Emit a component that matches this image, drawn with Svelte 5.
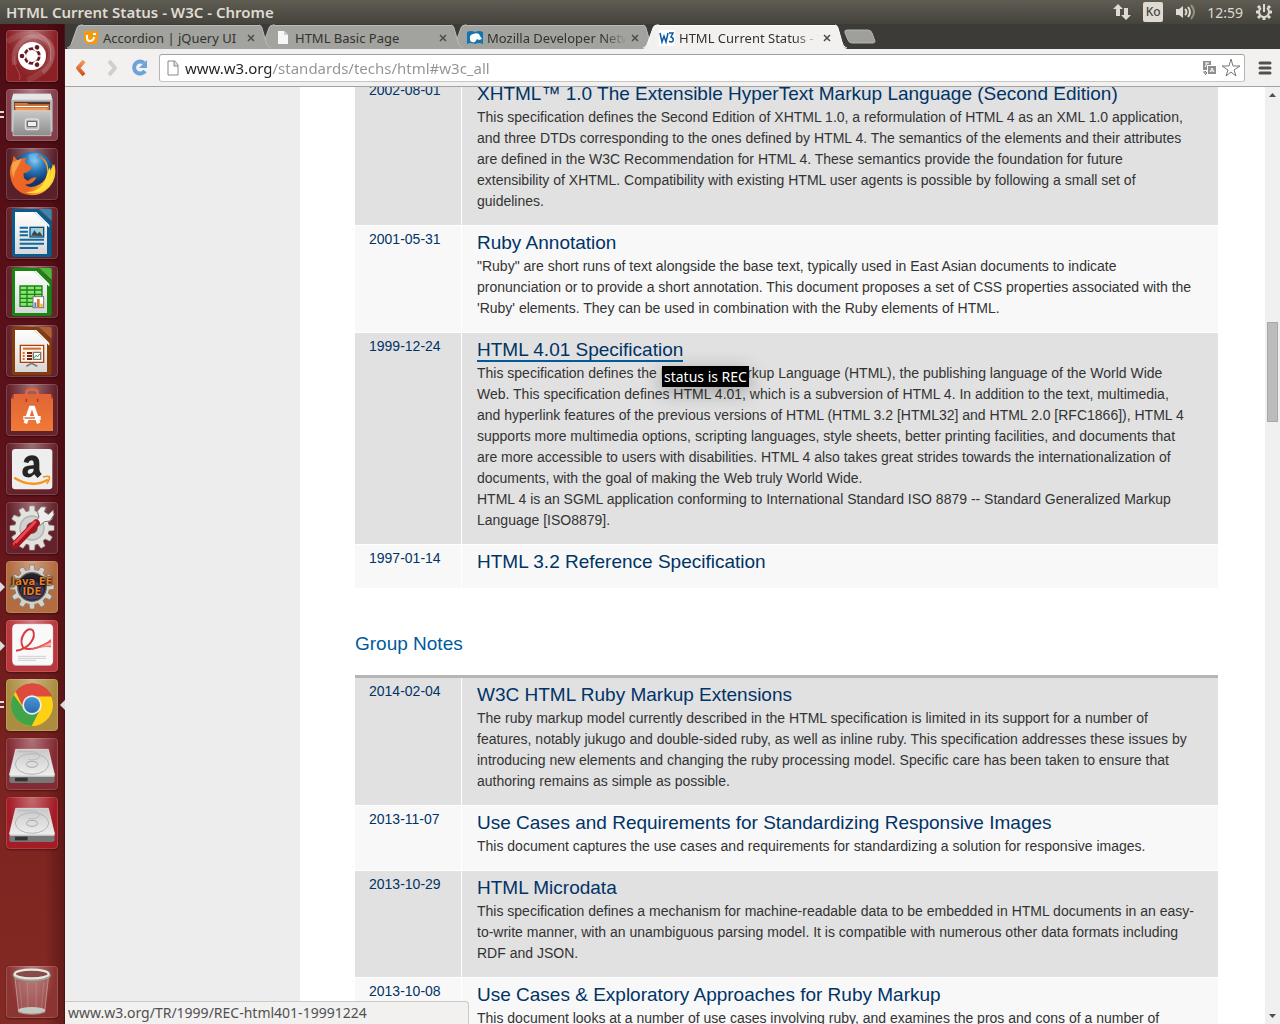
<script>
  const tabs = [
    { icon: 'jquery', title: 'Accordion | jQuery UI' },
    { icon: 'page', title: 'HTML Basic Page' },
    { icon: 'mdn', title: 'Mozilla Developer Network', long: true },
    { icon: 'w3', title: 'HTML Current Status - W3C', long: true, active: true }
  ];

  const launcher = [
    { id: 'dash', label: 'Search your computer' },
    { id: 'files', label: 'Files', windows: 2 },
    { id: 'firefox', label: 'Firefox' },
    { id: 'writer', label: 'LibreOffice Writer' },
    { id: 'calc', label: 'LibreOffice Calc' },
    { id: 'impress', label: 'LibreOffice Impress' },
    { id: 'software', label: 'Software Center' },
    { id: 'amazon', label: 'Amazon' },
    { id: 'settings', label: 'System Settings' },
    { id: 'eclipse', label: 'Java EE IDE', windows: 1 },
    { id: 'reader', label: 'Document Viewer', windows: 1 },
    { id: 'chrome', label: 'Google Chrome', windows: 2, focused: true },
    { id: 'disk', label: 'Disk volume 1' },
    { id: 'disk2', label: 'Disk volume 2' },
    { id: 'trash', label: 'Trash' }
  ];

  const recommendations = [
    { date: '2002-08-01', title: 'XHTML™ 1.0 The Extensible HyperText Markup Language (Second Edition)', text: ['This specification defines the Second Edition of XHTML 1.0, a reformulation of HTML 4 as an XML 1.0 application, and three DTDs corresponding to the ones defined by HTML 4. The semantics of the elements and their attributes are defined in the W3C Recommendation for HTML 4. These semantics provide the foundation for future extensibility of XHTML. Compatibility with existing HTML user agents is possible by following a small set of guidelines.'] },
    { date: '2001-05-31', title: 'Ruby Annotation', text: ['"Ruby" are short runs of text alongside the base text, typically used in East Asian documents to indicate pronunciation or to provide a short annotation. This document proposes a set of CSS properties associated with the \'Ruby\' elements. They can be used in combination with the Ruby elements of HTML.'] },
    { date: '1999-12-24', title: 'HTML 4.01 Specification', hover: true, tip: 'status is REC', text: ['This specification defines the HyperText Markup Language (HTML), the publishing language of the World Wide Web. This specification defines HTML 4.01, which is a subversion of HTML 4. In addition to the text, multimedia, and hyperlink features of the previous versions of HTML (HTML 3.2 [HTML32] and HTML 2.0 [RFC1866]), HTML 4 supports more multimedia options, scripting languages, style sheets, better printing facilities, and documents that are more accessible to users with disabilities. HTML 4 also takes great strides towards the internationalization of documents, with the goal of making the Web truly World Wide.', 'HTML 4 is an SGML application conforming to International Standard ISO 8879 -- Standard Generalized Markup Language [ISO8879].'] },
    { date: '1997-01-14', title: 'HTML 3.2 Reference Specification', text: [] }
  ];

  const notes = [
    { date: '2014-02-04', title: 'W3C HTML Ruby Markup Extensions', text: ['The ruby markup model currently described in the HTML specification is limited in its support for a number of features, notably jukugo and double-sided ruby, as well as inline ruby. This specification addresses these issues by introducing new elements and changing the ruby processing model. Specific care has been taken to ensure that authoring remains as simple as possible.'] },
    { date: '2013-11-07', title: 'Use Cases and Requirements for Standardizing Responsive Images', text: ['This document captures the use cases and requirements for standardizing a solution for responsive images.'] },
    { date: '2013-10-29', title: 'HTML Microdata', text: ['This specification defines a mechanism for machine-readable data to be embedded in HTML documents in an easy-to-write manner, with an unambiguous parsing model. It is compatible with numerous other data formats including RDF and JSON.'] },
    { date: '2013-10-08', title: 'Use Cases & Exploratory Approaches for Ruby Markup', text: ['This document looks at a number of use cases involving ruby, and examines the pros and cons of a number of approaches.'] }
  ];

  const address = 'www.w3.org/standards/techs/html#w3c_all';
  const teeth = Array.from({ length: 12 }, (_, i) => i * 30);
</script>

{#snippet rows(items)}
  <tbody>
    {#each items as item}
      <tr>
        <td class="date"><a href="#history">{item.date}</a></td>
        <td class="spec">
          <h3><a href="#spec" class:hover={item.hover}>{item.title}{#if item.tip}<span class="tip" role="tooltip">{item.tip}</span>{/if}</a></h3>
          {#each item.text as p}<p>{p}</p>{/each}
        </td>
      </tr>
    {/each}
  </tbody>
{/snippet}

{#snippet gear(fill, stroke)}
  <g fill={fill} stroke={stroke} stroke-width="2">
    {#each teeth as a}
      <path d="M69 30 L71 12 H85 L87 30Z" transform="rotate({a} 78 78)" />
    {/each}
  </g>
  <circle cx="78" cy="78" r="51" fill={fill} />
{/snippet}

{#snippet doc(dark, light)}
  <path d="M24 6H98L137 46V144Q137 150 131 150H24Q18 150 18 144V12Q18 6 24 6Z" fill={dark} />
  <path d="M101 6H132Q137 6 137 12V42Z" fill={light} />
  <path d="M27 15H84L123 54V141H27Z" fill="url(#paper)" />
  <path d="M84 15H91L130 54V62Z" fill="#fff" />
{/snippet}

{#snippet appIcon(id)}
  <svg viewBox="0 0 156 156" aria-hidden="true">
    {#if id === 'dash'}
      <g fill="none" stroke="#fff">
        <path d="M26 104C14 50 60 6 108 24S146 100 110 128" stroke-opacity=".16" stroke-width="14" />
        <path d="M4 36C40 6 96 4 124 38S126 130 64 150" stroke-opacity=".1" stroke-width="18" />
        <path d="M40 150C50 130 22 114 24 80" stroke-opacity=".3" stroke-width="2" />
        <path d="M92 8Q142 26 134 92" stroke-opacity=".4" stroke-width="2" />
      </g>
      <circle cx="78" cy="78" r="42" fill="#fff" />
      <circle cx="78" cy="78" r="22" fill="none" stroke="#681b23" stroke-width="8" />
      {#each [0, 120, 240] as a}
        <g transform="rotate({a} 78 78)">
          <circle cx="49" cy="78" r="11" fill="#fff" />
          <circle cx="48" cy="78" r="7" fill="#681b23" />
          <path d="M95 78h18" stroke="#fff" stroke-width="4" />
        </g>
      {/each}
    {:else if id === 'files'}
      <path d="M22 14H134L140 34V128H16V34Z" fill="#b9b9b9" />
      <path d="M22 14H134L139 32H17Z" fill="#e6e6e6" />
      <path d="M24 38H132V64H24Z" fill="#4b3834" />
      <path d="M26 42H64L67 46H130V66H26Z" fill="#d4763b" />
      <path d="M28 51H126V54H28Z" fill="#fff" />
      <path d="M30 57H124V66H30Z" fill="#ef9650" />
      <path d="M21 65H135V140H21Z" fill="url(#metal)" stroke="#dedede" stroke-width="2" />
      <rect x="58" y="90" width="40" height="32" rx="5" fill="#bcbcbc" stroke="#eee" stroke-width="3" />
      <rect x="64" y="97" width="28" height="16" rx="2" fill="#eee" stroke="#555" stroke-width="3" />
    {:else if id === 'firefox'}
      <circle cx="80" cy="74" r="63" fill="url(#globe)" />
      <path d="M92 20C120 28 132 50 124 78L145 48Q158 98 118 128C80 156 20 140 13 85Q8 60 19 43L23 23L34 37Q45 29 61 30Q52 44 62 48L78 58Q70 73 53 76Q50 95 67 98Q77 88 91 88Q84 109 57 110Q75 124 101 109Q122 96 123 76Q128 42 92 20Z" fill="url(#fox)" />
      <path d="M140 46Q150 94 118 124Q90 143 58 132Q112 134 124 76L130 58Q137 75 128 94Q139 79 140 46Z" fill="#ffdf38" />
      <path d="M20 43Q34 36 47 33L35 57Q26 69 22 89Q12 64 20 43Z" fill="#f8a247" />
      <path d="M67 21Q80 12 98 18L88 30L99 38L86 46L72 38Z" fill="#8ccbed" opacity=".45" />
    {:else if id === 'writer'}
      {@render doc('#075d8e', '#3687b2')}
      <path d="M41 62H66M41 74H66M41 85H66M41 98H114M41 110H114M41 123H96" stroke="#126b9f" stroke-width="6" />
      <rect x="72" y="61" width="41" height="29" fill="#8fd0f2" stroke="#124f77" stroke-width="4" />
      <path d="M75 86L85 70L94 80L101 74L110 87Z" fill="#444" />
      <circle cx="105" cy="68" r="4" fill="#ffc642" />
    {:else if id === 'calc'}
      {@render doc('#168512', '#48bd36')}
      <path d="M42 60H108V121H42Z" fill="#8ee174" stroke="#168512" stroke-width="4" />
      <path d="M42 72H108M42 85H108M42 97H108M42 109H108M63 60V121M86 60V121" stroke="#168512" stroke-width="4" />
      <rect x="81" y="92" width="32" height="33" fill="#fff" stroke="#777" stroke-width="3" />
      <path d="M85 109H91V123H85Z" fill="#3d8bce" /><path d="M93 99H101V123H93Z" fill="#e57026" /><path d="M103 113H110V123H103Z" fill="#f4be00" />
    {:else if id === 'impress'}
      {@render doc('#843c0c', '#ae602f')}
      <path d="M43 61H113V112H43Z" fill="#fff1e7" stroke="#a6430a" stroke-width="4" />
      <path d="M51 71H105" stroke="#d36b31" stroke-width="6" />
      <path d="M50 84H56M50 93H56M50 102H56" stroke="#d76d37" stroke-width="6" />
      <path d="M63 84H78M63 93H78M63 102H78" stroke="#73220b" stroke-width="6" />
      <path d="M82 82H104V103H82Z" fill="#fff" stroke="#777" stroke-width="4" />
      <path d="M85 98L90 91L95 95L101 87" stroke="#31902a" stroke-width="3" fill="none" />
      <path d="M77 112V116M61 124L77 115L94 124" stroke="#777" stroke-width="5" fill="none" />
    {:else if id === 'software'}
      <path d="M15 44L23 30H135L141 44V141H15Z" fill="url(#bag)" />
      <path d="M15 44L23 30V44ZM141 44L135 30V44Z" fill="#ac4428" />
      <path d="M61 51V25Q61 16 78 16T95 25V51" fill="none" stroke="#e36639" stroke-width="8" />
      <path d="M58 118L74 71H82L98 118" fill="none" stroke="#fff" stroke-width="11" />
      <path d="M52 102H104" stroke="#fff" stroke-width="12" />
      <path d="M55 102H87" stroke="#df5b2e" stroke-width="4" />
      <path d="M61 44V54M95 44V54" stroke="#a64127" stroke-width="5" />
    {:else if id === 'amazon'}
      <rect x="18" y="18" width="121" height="121" rx="10" fill="#eee" />
      <path d="M53 57Q57 37 78 37Q100 37 100 61V79Q100 87 107 93L95 105Q87 98 85 94Q75 105 64 103Q49 101 49 86Q49 66 83 67V61Q83 52 76 52Q69 52 67 60ZM83 77Q65 76 65 87Q65 93 71 92Q83 91 83 77Z" fill="#252525" fill-rule="evenodd" />
      <path d="M25 104Q76 137 126 110" fill="none" stroke="#f59419" stroke-width="7" />
      <path d="M111 102Q124 98 130 101Q132 111 122 122" fill="none" stroke="#f59419" stroke-width="5" />
    {:else if id === 'settings'}
      {@render gear('#e2e2df', '#aaa')}
      <circle cx="78" cy="78" r="36" fill="#d1d1ce" stroke="#b2b2ae" stroke-width="4" />
      <circle cx="78" cy="78" r="17" fill="#7d3338" />
      <path d="M89 60L102 70L115 59L132 57L144 38L142 24L127 37L115 29L121 15L105 14L94 28L99 45Z" fill="#eee" stroke="#777" stroke-width="3" />
      <path d="M28 128L90 64" stroke="#a8121e" stroke-width="23" stroke-linecap="round" />
      <path d="M25 125L87 60" stroke="#e64a50" stroke-width="9" stroke-linecap="round" />
      <circle cx="29" cy="127" r="3" fill="#551b20" />
    {:else if id === 'eclipse'}
      {@render gear('#d3d2cb', '#777')}
      <circle cx="78" cy="78" r="43" fill="#25202e" stroke="#666" stroke-width="4" />
      <ellipse cx="78" cy="88" rx="35" ry="28" fill="#443d61" />
    {:else if id === 'reader'}
      <rect x="20" y="16" width="120" height="122" rx="11" fill="#aaa" />
      <rect x="20" y="13" width="120" height="121" rx="11" fill="#f9f9f9" stroke="#fff" stroke-width="2" />
      <path d="M30 92C66 88 92 55 81 32C65 14 36 55 51 82Q74 98 135 64" fill="none" stroke="#dc3940" stroke-width="6" />
      <path d="M72 86Q110 80 135 57V82Q105 78 72 91Z" fill="#e8605f" />
      <path d="M92 84Q117 78 135 66V78Q112 78 92 84Z" fill="#f9b0ad" />
      <path d="M36 109H120M36 115H120M36 121H90" stroke="#bbb" stroke-width="2" />
    {:else if id === 'chrome'}
      <circle cx="78" cy="78" r="63" fill="#ffd112" />
      <path d="M78 78L29 38A63 63 0 0 1 137 52H78Z" fill="#da3832" />
      <path d="M78 78L54 91L23 47A63 63 0 0 0 77 141L102 92Z" fill="#42a449" />
      <path d="M29 38L54 91L78 52H137A63 63 0 0 0 29 38Z" fill="#de4a3c" />
      <circle cx="78" cy="78" r="29" fill="#eef1f3" />
      <circle cx="78" cy="78" r="24" fill="url(#blue)" />
    {:else if id === 'trash'}
      <path d="M27 37L38 139Q78 151 116 139L127 37Z" fill="#c99" fill-opacity=".3" stroke="#d4b9b4" stroke-opacity=".6" stroke-width="3" />
      <path d="M40 47L48 130M114 47L106 130M64 48L66 126M91 48L90 126" stroke="#fff" stroke-opacity=".12" stroke-width="4" />
      <ellipse cx="77" cy="133" rx="41" ry="10" fill="#c4c8c2" />
      <path d="M24 25Q24 41 77 41T131 25" fill="none" stroke="#999f98" stroke-width="9" />
      <ellipse cx="77" cy="24" rx="51" ry="13" fill="#874c48" stroke="#e4e8e0" stroke-width="7" />
    {:else}
      <path d="M29 34H127L146 112H10Z" fill="url(#drive)" stroke="#eee" stroke-width="2" />
      <path d="M10 111H146V130L141 135H14L10 130Z" fill="#777" />
      <path d="M12 111H145V116H12Z" fill="#ddd" />
      <path d="M27 119H65V130H27Z" fill="#333" />
      <ellipse cx="78" cy="78" rx="50" ry="31" fill="none" stroke="#b5b5b5" stroke-width="3" />
      <ellipse cx="78" cy="79" rx="17" ry="9" fill="#ddd" stroke="#aaa" stroke-width="3" />
      <path d="M36 41H80Q105 44 99 58Q90 68 67 65" fill="none" stroke="#bbb" stroke-width="3" />
    {/if}
  </svg>
{/snippet}

<svg class="defs" aria-hidden="true">
  <defs>
    <linearGradient id="paper" x2="0" y2="1"><stop stop-color="#fff" /><stop offset="1" stop-color="#d7d7d7" /></linearGradient>
    <linearGradient id="metal" x2="0" y2="1"><stop stop-color="#c8c8c8" /><stop offset="1" stop-color="#8c8c8c" /></linearGradient>
    <linearGradient id="drive" x2="0" y2="1"><stop stop-color="#c9c9c9" /><stop offset="1" stop-color="#eee" /></linearGradient>
    <linearGradient id="bag" x2="0" y2="1"><stop stop-color="#e06437" /><stop offset="1" stop-color="#f17a35" /></linearGradient>
    <radialGradient id="globe" cx=".55" cy=".22"><stop stop-color="#80c5ef" /><stop offset=".5" stop-color="#2476b8" /><stop offset="1" stop-color="#123468" /></radialGradient>
    <linearGradient id="fox" x2="1" y2=".3"><stop stop-color="#ee6a2a" /><stop offset=".6" stop-color="#ed6424" /><stop offset="1" stop-color="#ffcf34" /></linearGradient>
    <linearGradient id="blue" x2="0" y2="1"><stop stop-color="#4a95d5" /><stop offset="1" stop-color="#286dad" /></linearGradient>
    <linearGradient id="orange" x2="0" y2="1"><stop stop-color="#f09a62" /><stop offset="1" stop-color="#d84a18" /></linearGradient>
  </defs>
</svg>

<div class="desktop">
  <header class="panel">
    <h1>HTML Current Status - W3C - Chrome</h1>
    <div class="indicators">
      <svg width="18" height="18" viewBox="0 0 18 18" aria-hidden="true"><path d="M5 1L10 6H7V13H3V6H0ZM13 17L8 12H11V5H15V12H18Z" fill="#dfdbd2" /></svg>
      <span class="lang">Ko</span>
      <svg width="20" height="18" viewBox="0 0 20 18" aria-hidden="true"><path d="M1 6H4L8 3V15L4 12H1Z" fill="#dfdbd2" /><g fill="none" stroke="#dfdbd2" stroke-width="2"><path d="M10 6Q13 9 10 12" /><path d="M13 4Q17 9 13 14" /><path d="M16 2Q22 9 16 16" opacity=".45" /></g></svg>
      <time>12:59</time>
      <svg width="18" height="18" viewBox="0 0 18 18" aria-hidden="true"><g fill="none" stroke="#dfdbd2" stroke-width="2"><path d="M6 5A5 5 0 1 0 12 5" /><path d="M9 1V9" /><path stroke-width="3" d="M1 9H4M14 9H17M3 3L5 5M15 3L13 5M3 15L5 13M15 15L13 13M9 17V14" /></g></svg>
    </div>
  </header>

  <nav class="launcher" aria-label="Launcher">
    {#each launcher as app}
      <button class="tile {app.id}" aria-label={app.label}>
        {@render appIcon(app.id)}
        {#if app.id === 'eclipse'}<span class="ide">Java EE<br />IDE</span>{/if}
        {#if app.windows === 1}<i class="pip"></i>{/if}
        {#if app.windows === 2}<i class="pips"></i>{/if}
        {#if app.focused}<i class="focus"></i>{/if}
      </button>
    {/each}
  </nav>

  <section class="browser">
    <div class="tabs" role="tablist">
      {#each tabs as tab}
        <div class="tab" class:active={tab.active}>
          <svg width="16" height="25" viewBox="0 0 16 25" aria-hidden="true"><path class="fill" d="M0 25C3 24 4 21 5 18L10 4Q11 1 14 1H16V25Z" /><path class="line" d="M0 24C3 23 4 21 5 18L10 4Q11 1 14 1H16" /></svg>
          <button class="label" role="tab" aria-selected={!!tab.active}>
            <svg width="16" height="16" viewBox="0 0 16 16" aria-hidden="true">
              {#if tab.icon === 'jquery'}
                <path d="M1 1H15V9Q15 14 10 14H6Q1 14 1 9Z" fill="#f8980e" /><path d="M4 5V8Q4 11 7 11Q10 11 11 8V7M10 4H13" stroke="#fff" stroke-width="2" fill="none" />
              {:else if tab.icon === 'page'}
                <path d="M3 1H9L13 5V14H3Z" fill="#f7f7f7" /><path d="M9 1V5H13Z" fill="#ccc" />
              {:else if tab.icon === 'mdn'}
                <path d="M0 2Q4 0 8 2Q12 0 16 2V14Q12 12 8 14Q4 12 0 14Z" fill="#1374b2" /><path d="M3 9Q2 5 6 4Q12 2 13 6L15 9L12 10L10 9L8 12Q3 13 3 9Z" fill="#fff" />
              {:else}
                <path d="M0 0H16V16H0Z" fill="#fff" /><path d="M1 3L3 12L5 6L7 12L9 3M10 3H14L12 7Q15 8 14 11Q12 13 10 11" fill="none" stroke="#0b5a9e" stroke-width="1.500" />
              {/if}
            </svg>
            <span class:long={tab.long}>{tab.title}</span>
          </button>
          <button class="close" aria-label="Close {tab.title}"><svg width="8" height="8" viewBox="0 0 8 8"><path d="M1 1L7 7M7 1L1 7" stroke="#4a4a46" stroke-width="1.500" /></svg></button>
          <svg width="12" height="25" viewBox="0 0 12 25" aria-hidden="true"><path class="fill" d="M12 25C9 24 8 21 7 18L3 4Q2 1 0 1V25Z" /><path class="line" d="M12 24C9 23 8 21 7 18L3 4Q2 1 0 1" /></svg>
        </div>
      {/each}
      <button class="new-tab" aria-label="New tab"><svg width="32" height="16" viewBox="0 0 32 16"><path d="M3 1H24Q27 1 28 4L31 12Q31 14 29 14H8Q5 14 4 11L1 4Q0 1 3 1Z" fill="#9f9f9b" stroke="#b4b4b0" /></svg></button>
    </div>

    <div class="toolbar">
      <button aria-label="Back"><svg width="20" height="20" viewBox="0 0 20 20"><path d="M12 3L6 10L12 17" fill="none" stroke="url(#orange)" stroke-width="4" stroke-linejoin="round" /></svg></button>
      <button aria-label="Forward"><svg width="20" height="20" viewBox="0 0 20 20"><path d="M8 3L14 10L8 17" fill="none" stroke="#d0cfcc" stroke-width="4" stroke-linejoin="round" /></svg></button>
      <button aria-label="Reload"><svg width="20" height="20" viewBox="0 0 20 20"><path d="M14 5A6 6 0 1 0 15 13" fill="none" stroke="#6ea3da" stroke-width="4" /><path d="M17 2V10H9Z" fill="#6ea3da" /></svg></button>
      <div class="omnibox">
        <svg width="14" height="16" viewBox="0 0 14 16" aria-hidden="true"><path d="M2 1H9L12 5V15H2Z" fill="#fff" stroke="#888" /><path d="M8 1V6H12" fill="#ddd" stroke="#888" /></svg>
        <input aria-label="Address" value={address} spellcheck="false" />
        <button aria-label="Translate this page"><svg width="16" height="16" viewBox="0 0 16 16"><path d="M1 1H9V5H5V10H1Z" fill="#8e8e8e" /><path d="M6 6H14V14H6Z" fill="#8e8e8e" /><path d="M3 3H7M5 3L3 7M8 12L10 8L12 12M9 11H11" fill="none" stroke="#fff" /><path d="M2 11V13H5M3 15L5 13L3 11" fill="none" stroke="#777" /></svg></button>
        <button aria-label="Bookmark this page"><svg width="20" height="20" viewBox="0 0 20 20"><path d="M10 1L12 8H19L13 12L15 18L10 14L5 18L7 12L1 8H8Z" fill="#fff" stroke="#777" stroke-linejoin="round" /></svg></button>
      </div>
      <button class="menu" aria-label="Menu"><svg width="14" height="14" viewBox="0 0 14 14"><path d="M2 2H12M2 7H12M2 12H12" stroke="#505050" stroke-width="3" stroke-linecap="round" /></svg></button>
    </div>

    <div class="viewport">
      <aside></aside>
      <main>
        <table class="first">{@render rows(recommendations)}</table>
        <h2>Group Notes</h2>
        <table class="notes">{@render rows(notes)}</table>
      </main>
      <div class="scrollbar" aria-hidden="true">
        <svg width="15" height="15" viewBox="0 0 15 15"><path d="M4 10L7.500 6L11 10Z" fill="#505050" /></svg>
        <div class="track"><div class="thumb"></div></div>
        <svg width="15" height="15" viewBox="0 0 15 15"><path d="M4 5L7.500 9L11 5Z" fill="#505050" /></svg>
      </div>
      <div class="status">www.w3.org/TR/1999/REC-html401-19991224</div>
    </div>
  </section>
</div>

<style>
  :global(body) { margin: 0; }
  .desktop, .desktop :global(*) { box-sizing: border-box; }
  .defs { position: absolute; width: 0; height: 0; }
  .desktop {
    height: 100vh;
    display: grid;
    grid-template: 24px minmax(0, 1fr) / 65px minmax(0, 1fr);
    overflow: hidden;
    background: #3c3b37;
    font-family: "Noto Sans", "Open Sans", sans-serif;
  }
  button { border: 0; padding: 0; background: none; font: inherit; color: inherit; display: flex; align-items: center; justify-content: center; }
  svg { display: block; flex: none; }

  .panel {
    grid-column: 1 / -1;
    display: flex;
    align-items: center;
    justify-content: space-between;
    padding: 0 7px 0 6px;
    background: linear-gradient(#5f5c52, #45433d);
    color: #dfdbd2;
  }
  h1 { margin: 0; font-size: 15px; font-weight: 600; line-height: 24px; }
  .indicators { display: flex; align-items: center; gap: 12px; font-size: 14px; }
  .lang { width: 20px; line-height: 20px; text-align: center; border-radius: 2px; background: #dfdbd2; color: #454440; font-size: 12px; font-weight: 500; }

  .launcher {
    display: flex;
    flex-direction: column;
    gap: 7px;
    padding: 6px;
    background: linear-gradient(90deg, transparent 70%, rgba(40, 0, 5, .35)), linear-gradient(#500d15, #5e121a 45%, #7b231f 75%, #842a25);
    border-right: 1px solid #4a1417;
  }
  .tile {
    position: relative;
    flex: none;
    width: 52px;
    height: 52px;
    border-radius: 4px;
    background: radial-gradient(ellipse at 50% 0, rgba(255, 255, 255, .35), transparent 65%), var(--tint, #66222b);
    box-shadow: inset 0 0 0 1px rgba(255, 255, 255, .15), 0 1px 2px rgba(0, 0, 0, .4);
  }
  .tile > svg { width: 52px; height: 52px; }
  .dash { --tint: #8b2125; }
  .files { --tint: #83404b; }
  .firefox { --tint: #59202a; }
  .eclipse { --tint: #b26c40; }
  .reader { --tint: #b9383d; }
  .chrome { --tint: #ac8d40; }
  .disk { --tint: #842a32; }
  .disk2 { --tint: #a31c26; }
  .trash { --tint: #8b3431; margin-top: auto; }
  .ide { position: absolute; inset: 16px 0 0; font: 700 10px/10px "DejaVu Sans", sans-serif; color: #e07f28; text-shadow: 0 0 2px #000, 0 0 2px #000, 0 0 1px #000; white-space: nowrap; text-align: center; }
  .pip { position: absolute; left: -6px; top: 21px; border: solid transparent; border-width: 5px 0 5px 5px; border-left-color: #ddd; }
  .pips { position: absolute; left: -6px; top: 22px; width: 4px; height: 7px; border: solid #ddd; border-width: 2px 0; }
  .focus { position: absolute; right: -7px; top: 21px; border: solid transparent; border-width: 5px 5px 5px 0; border-right-color: #ddd; }

  .browser { display: flex; flex-direction: column; min-width: 0; min-height: 0; }
  .tabs { display: flex; height: 25px; padding-left: 2px; font-size: 13px; color: #33322e; }
  .tab { position: relative; z-index: 1; display: flex; width: 204px; margin-right: -12px; min-width: 0; }
  .tab:nth-child(1) { z-index: 3; }
  .tab:nth-child(2) { z-index: 2; }
  .tab.active { z-index: 4; }
  .fill { fill: #a2a29e; }
  .line { fill: none; stroke: #bcbcb8; }
  .active .fill { fill: #f2f1f0; }
  .active .line { stroke: #fff; }
  .label, .close { height: 24px; margin-top: 1px; background: #a2a29e; border-top: 1px solid #bcbcb8; }
  .active .label, .active .close { background: #f2f1f0; border-color: #fff; }
  .label { flex: 1; min-width: 0; gap: 4px; justify-content: flex-start; }
  .label span { flex: 1; min-width: 0; text-align: left; overflow: hidden; white-space: nowrap; }
  .label .long { mask-image: linear-gradient(90deg, #000 calc(100% - 24px), transparent); }
  .close { width: 16px; }
  .new-tab { margin-left: 9px; }

  .toolbar { flex: none; height: 38px; display: flex; align-items: center; gap: 9px; padding: 0 4px 0 7px; background: #f2f1f0; border-bottom: 1px solid #a3a3a3; }
  .omnibox { flex: 1; min-width: 0; height: 28px; display: flex; align-items: center; gap: 3px; padding: 0 3px 0 6px; background: #fff; border: 1px solid #a9a9a9; border-color: #a0a0a0 #b5b5b5 #c5c5c5; border-radius: 3px; }
  input {
    flex: 1;
    min-width: 0;
    height: 26px;
    border: 0;
    padding: 0 2px;
    outline: 0;
    font: 15px/24px "Noto Sans", "Open Sans", sans-serif;
    color: transparent;
    background: linear-gradient(90deg, #222 88px, #929292 88px);
    background-clip: text;
  }
  .menu { width: 22px; }

  .viewport { position: relative; flex: 1; min-height: 0; display: flex; overflow: hidden; background: #fff; font: 14px/21px "Liberation Sans", Arial, sans-serif; color: #333; }
  aside { flex: none; width: 235px; background: #ededed; }
  main { flex: 1; min-width: 0; padding: 0 47px 0 55px; }
  table { width: 100%; border-collapse: separate; border-spacing: 0; }
  .first { margin-top: -10px; }
  td { vertical-align: top; border-bottom: 1px solid #fff; background: #f8f8f8; padding: 5px 23px 13px 15px; }
  tr:nth-child(odd) td { background: #e1e1e1; }
  td.date { width: 107px; padding: 3px 0 0 14px; border-right: 1px solid #fff; white-space: nowrap; }
  a { color: #003366; text-decoration: none; }
  h3 { margin: 0 0 1px; font-size: 19px; line-height: 24px; font-weight: 400; }
  h3 a { position: relative; }
  .first tr:nth-child(even) td, .notes tr:nth-child(even) td { background: #f8f8f8; }
  .first tr:nth-child(1) td, .first tr:nth-child(3) td { background: #e1e1e1; }
  .hover { border-bottom: 2px solid #005a9c; }
  p { margin: 0; }
  h2 { margin: 42px 0 19px; color: #005a9c; font-size: 19px; line-height: 25px; font-weight: 400; }
  .notes { border-top: 3px solid #b5b5b5; }
  .tip { position: absolute; z-index: 2; left: 185px; top: 27px; padding: 0 2px; background: #000; color: #fff; font: 14px/21px "Noto Sans", "Open Sans", sans-serif; white-space: nowrap; box-shadow: 0 5px 20px rgba(0, 0, 0, .3); }
  .scrollbar { flex: none; width: 15px; display: flex; flex-direction: column; background: #f0f0f0; }
  .track { flex: 1; padding: 220px 2px 0; }
  .thumb { height: 100px; background: #bcbcbc; border: 1px solid #a8a8a8; }
  .status { position: absolute; left: 0; bottom: 0; width: 404px; height: 23px; padding-left: 3px; background: #f2f1f0; border: solid #c9c9c9; border-width: 1px 1px 0 0; border-radius: 0 4px 0 0; font: 14px/22px "Noto Sans", "Open Sans", sans-serif; color: #505050; white-space: nowrap; }
</style>
